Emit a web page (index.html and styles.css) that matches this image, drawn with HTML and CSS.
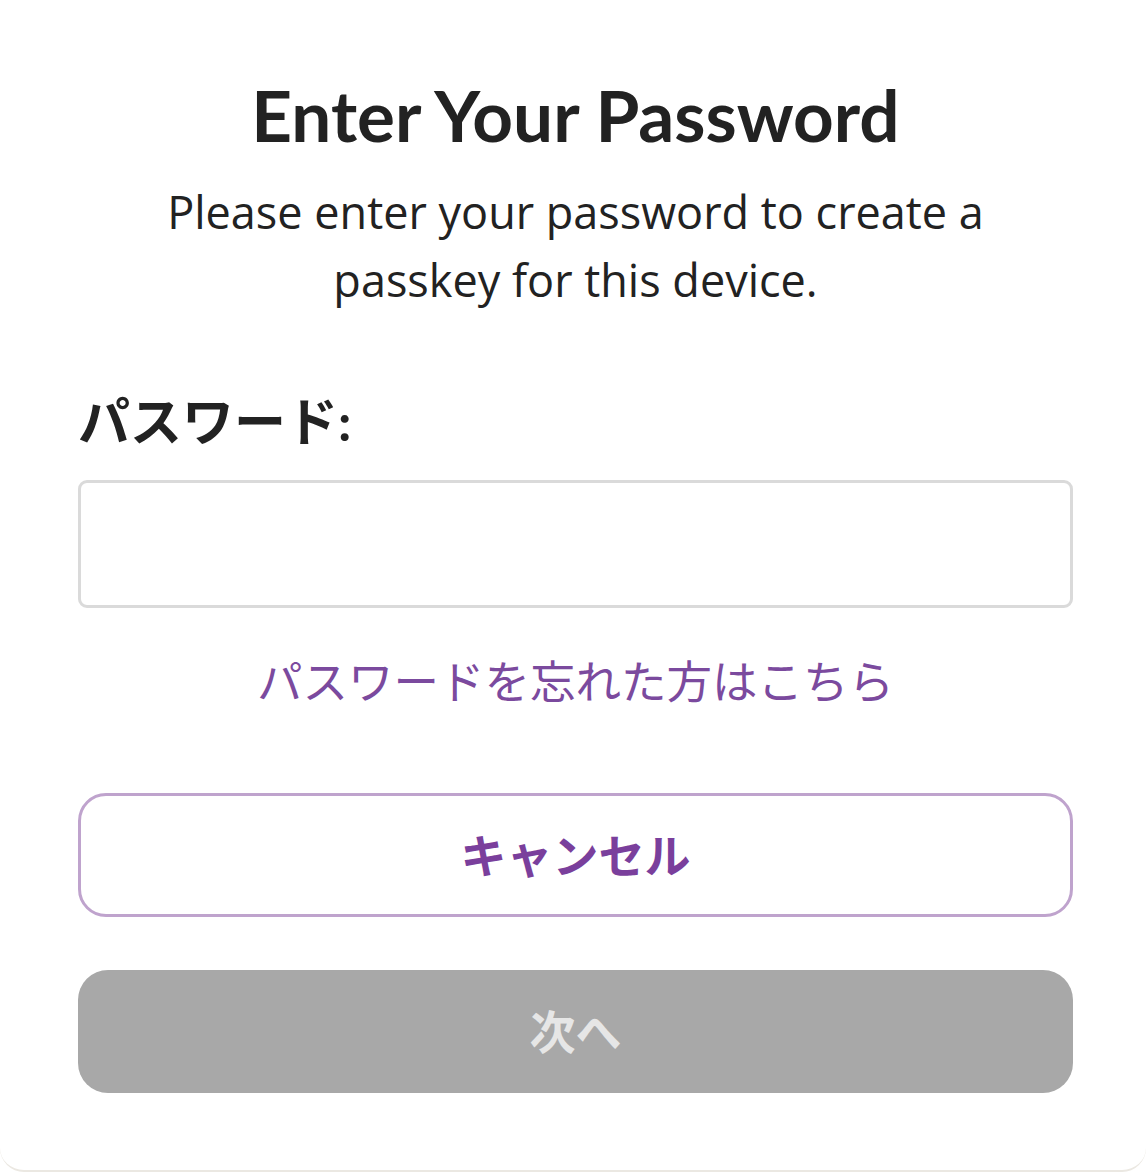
FILE: index.html
```html
<!DOCTYPE html>
<html lang="ja">
<head>
<meta charset="utf-8">
<title>Enter Your Password</title>
<link rel="stylesheet" href="styles.css">
</head>
<body>
<main class="card">
  <h1 class="title">Enter Your Password</h1>
  <p class="subtitle">Please enter your password to create a<br>passkey for this device.</p>
  <label class="label" for="pw">パスワード:</label>
  <input class="input" id="pw" type="password">
  <a class="forgot" href="#">パスワードを忘れた方はこちら</a>
  <button class="btn btn-cancel" type="button">キャンセル</button>
  <button class="btn btn-next" type="button" disabled>次へ</button>
</main>
</body>
</html>
```
FILE: styles.css
```css
html, body {
  margin: 0;
  padding: 0;
  background: #ffffff;
}
body {
  font-family: Lato, "Noto Sans CJK JP", sans-serif;
  color: #222222;
}
.card {
  box-sizing: border-box;
  width: 1146px;
  height: 1172px;
  padding: 73px 73px 0 78px;
  display: flex;
  flex-direction: column;
  background: #ffffff;
  border-radius: 24px;
  border-bottom: 2px solid #ebe8e2;
}
.title {
  margin: 0;
  font-size: 71px;
  line-height: 84px;
  font-weight: 700;
  text-align: center;
  color: #222222;
}
.subtitle {
  margin: 21px 0 0;
  font-family: "Open Sans", "Noto Sans CJK JP", sans-serif;
  font-size: 45px;
  line-height: 68px;
  font-weight: 400;
  text-align: center;
  color: #222222;
}
.label {
  margin-top: 77px;
  font-family: Lato, "Noto Sans CJK JP", sans-serif;
  font-size: 52px;
  line-height: 60px;
  font-weight: 700;
  color: #222222;
}
.input {
  box-sizing: border-box;
  margin-top: 29px;
  width: 100%;
  height: 128px;
  border: 3px solid #dadada;
  border-radius: 9px;
  background: #ffffff;
  outline: none;
}
.forgot {
  margin-top: 41px;
  font-family: "Noto Sans CJK JP", sans-serif;
  font-size: 45.5px;
  line-height: 60px;
  text-align: center;
  color: #7b4a9e;
  text-decoration: none;
}
.btn {
  box-sizing: border-box;
  width: 100%;
  font-family: "Noto Sans CJK JP", sans-serif;
  font-size: 46px;
  font-weight: 700;
  text-align: center;
  padding: 0;
}
.btn-cancel {
  margin-top: 84px;
  height: 124px;
  border: 3px solid #bfa3cd;
  border-radius: 28px;
  background: #ffffff;
  color: #7a3f9c;
  padding-bottom: 4px;
}
.btn-next {
  margin-top: 53px;
  height: 123px;
  border: none;
  border-radius: 30px;
  background: #a8a8a8;
  color: #e6e6e6;
  padding-bottom: 6px;
}
```
